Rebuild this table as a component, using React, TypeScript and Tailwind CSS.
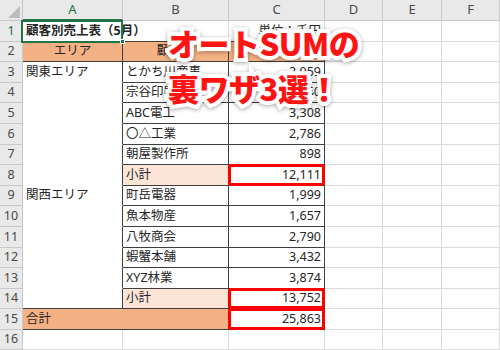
import React from "react";

const font = "font-['Noto_Sans','Noto_Sans_CJK_JP',sans-serif]";

type Kind = "title" | "head" | "data" | "sub" | "total" | "empty";

type RowData = {
  n: number;
  h: string;
  kind: Kind;
  a?: string;
  b?: string;
  c?: string;
  aBottom?: "white" | "dark";
  boxed?: boolean;
};

const rows: RowData[] = [
  { n: 1, h: "h-[21px]", kind: "title", a: "顧客別売上表（5月）", c: "単位：千円" },
  { n: 2, h: "h-[20px]", kind: "head", a: "エリア", b: "顧客名", c: "売上高" },
  { n: 3, h: "h-[21px]", kind: "data", a: "関東エリア", b: "とかち川商事", c: "2,059", aBottom: "white" },
  { n: 4, h: "h-[20px]", kind: "data", b: "宗谷印刷", c: "3,060", aBottom: "white" },
  { n: 5, h: "h-[21px]", kind: "data", b: "ABC電工", c: "3,308", aBottom: "white" },
  { n: 6, h: "h-[21px]", kind: "data", b: "〇△工業", c: "2,786", aBottom: "white" },
  { n: 7, h: "h-[20px]", kind: "data", b: "朝屋製作所", c: "898", aBottom: "white" },
  { n: 8, h: "h-[21px]", kind: "sub", b: "小計", c: "12,111", aBottom: "white", boxed: true },
  { n: 9, h: "h-[20px]", kind: "data", a: "関西エリア", b: "町岳電器", c: "1,999", aBottom: "white" },
  { n: 10, h: "h-[21px]", kind: "data", b: "魚本物産", c: "1,657", aBottom: "white" },
  { n: 11, h: "h-[21px]", kind: "data", b: "八牧商会", c: "2,790", aBottom: "white" },
  { n: 12, h: "h-[20px]", kind: "data", b: "蝦蟹本舗", c: "3,432", aBottom: "white" },
  { n: 13, h: "h-[21px]", kind: "data", b: "XYZ林業", c: "3,874", aBottom: "white" },
  { n: 14, h: "h-[20px]", kind: "sub", b: "小計", c: "13,752", aBottom: "dark", boxed: true },
  { n: 15, h: "h-[21px]", kind: "total", a: "合計", c: "25,863", boxed: true },
  { n: 16, h: "h-[20px]", kind: "empty" },
];

function RedBox() {
  return (
    <div className="absolute -left-[1px] -top-[1px] -right-[1px] -bottom-[1px] z-10 rounded-[3px] border-[3px] border-[#ff0000]" />
  );
}

function SheetRow({ r }: { r: RowData }) {
  const grid = "border-r border-b border-[#dadada]";
  const dark = "border-r border-b border-[#3f3f3f]";
  const cellText = "text-[12.5px] text-[#262626] leading-none";

  let aCls = grid;
  let bCls = grid;
  let cCls = grid;
  if (r.kind === "title") {
    aCls = "border-r border-b border-r-[#dadada] border-b-[#3f3f3f]";
    bCls = aCls;
    cCls = aCls;
  } else if (r.kind === "head") {
    aCls = dark + " bg-[#f4b183]";
    bCls = dark + " bg-[#f4b183]";
    cCls = dark + " bg-[#f4b183]";
  } else if (r.kind === "data" || r.kind === "sub") {
    aCls =
      "border-r border-b border-r-[#3f3f3f] bg-white " +
      (r.aBottom === "dark" ? "border-b-[#3f3f3f]" : "border-b-white");
    bCls = dark + (r.kind === "sub" ? " bg-[#fce4d6]" : " bg-white");
    cCls = dark + " bg-white";
  } else if (r.kind === "total") {
    cCls = dark + " bg-white";
  }

  return (
    <div className={`flex ${r.h}`}>
      <div
        className={`w-[23px] shrink-0 flex items-center justify-center border-r border-b border-[#c9c9c9] bg-[#e9e9e9] text-[12.5px] ${
          r.n === 1 ? "text-[#217346]" : "text-[#4a4a4a]"
        }`}
      >
        {r.n}
      </div>
      {r.kind === "total" ? (
        <div className={`w-[206px] shrink-0 flex items-center pl-[3px] border-r border-b border-[#3f3f3f] bg-[#f4b183] ${cellText}`}>
          {r.a}
        </div>
      ) : (
        <>
          <div
            className={`relative w-[100px] shrink-0 flex items-center ${
              r.kind === "head" ? "justify-center" : "pl-[3px]"
            } ${aCls} ${cellText} ${r.kind === "title" ? "font-bold z-[5] whitespace-nowrap" : ""}`}
          >
            {r.kind === "title" ? (
              <>
                <span className="absolute left-[3px] top-1/2 -translate-y-1/2">{r.a}</span>
                <div className="absolute -left-[2px] -top-[1px] w-[102px] h-[23px] border-2 border-[#217346]" />
                <div className="absolute -right-[3px] -bottom-[3px] w-[5px] h-[5px] bg-[#217346] border border-white" />
              </>
            ) : (
              r.a
            )}
          </div>
          <div
            className={`w-[106px] shrink-0 flex items-center ${
              r.kind === "head" ? "justify-center" : "pl-[3px]"
            } ${bCls} ${cellText}`}
          >
            {r.b}
          </div>
        </>
      )}
      <div
        className={`relative w-[96px] shrink-0 flex items-center ${
          r.kind === "head" ? "justify-center" : "justify-end pr-[3px]"
        } ${cCls} ${cellText}`}
      >
        {r.c}
        {r.boxed && <RedBox />}
      </div>
      <div className={`w-[58px] shrink-0 ${grid}`} />
      <div className={`w-[59px] shrink-0 ${grid}`} />
      <div className={`flex-1 ${grid}`} />
    </div>
  );
}

function HeadLine() {
  const h =
    "shrink-0 flex items-center justify-center border-r border-b border-[#c9c9c9] bg-[#e9e9e9] text-[13px] text-[#4a4a4a]";
  return (
    <div className="flex h-[21px]">
      <div className={`w-[23px] ${h} items-end justify-end`}>
        <svg width="12" height="12" viewBox="0 0 12 12" className="mb-[2px] mr-[2px]">
          <polygon points="12,0 12,12 0,12" fill="#bdbdbd" />
        </svg>
      </div>
      <div className={`w-[100px] ${h} text-[#217346] border-b-2 border-b-[#217346] bg-[#dcdcdc]`}>A</div>
      <div className={`w-[106px] ${h}`}>B</div>
      <div className={`w-[96px] ${h}`}>C</div>
      <div className={`w-[58px] ${h}`}>D</div>
      <div className={`w-[59px] ${h}`}>E</div>
      <div className={`flex-1 ${h}`}>F</div>
    </div>
  );
}

function Caption({ text }: { text: string }) {
  return (
    <div className="grid">
      <span className="relative col-start-1 row-start-1 text-white [-webkit-text-stroke:8px_white] [filter:drop-shadow(0_1px_2px_rgba(0,0,0,0.35))]">
        {text}
      </span>
      <span className="relative col-start-1 row-start-1 text-[#ff1414]">{text}</span>
    </div>
  );
}

export default function App() {
  return (
    <div className={`relative w-[500px] h-[350px] overflow-hidden bg-white ${font}`}>
      <HeadLine />
      {rows.map((r) => (
        <SheetRow key={r.n} r={r} />
      ))}
      <div className="absolute left-[168px] top-[20px] z-20 text-[31px] leading-[45px] font-black tracking-[-0.5px] whitespace-nowrap font-['Noto_Sans_CJK_JP',sans-serif]">
        <Caption text="オートSUMの" />
        <Caption text="裏ワザ3選！" />
      </div>
    </div>
  );
}
